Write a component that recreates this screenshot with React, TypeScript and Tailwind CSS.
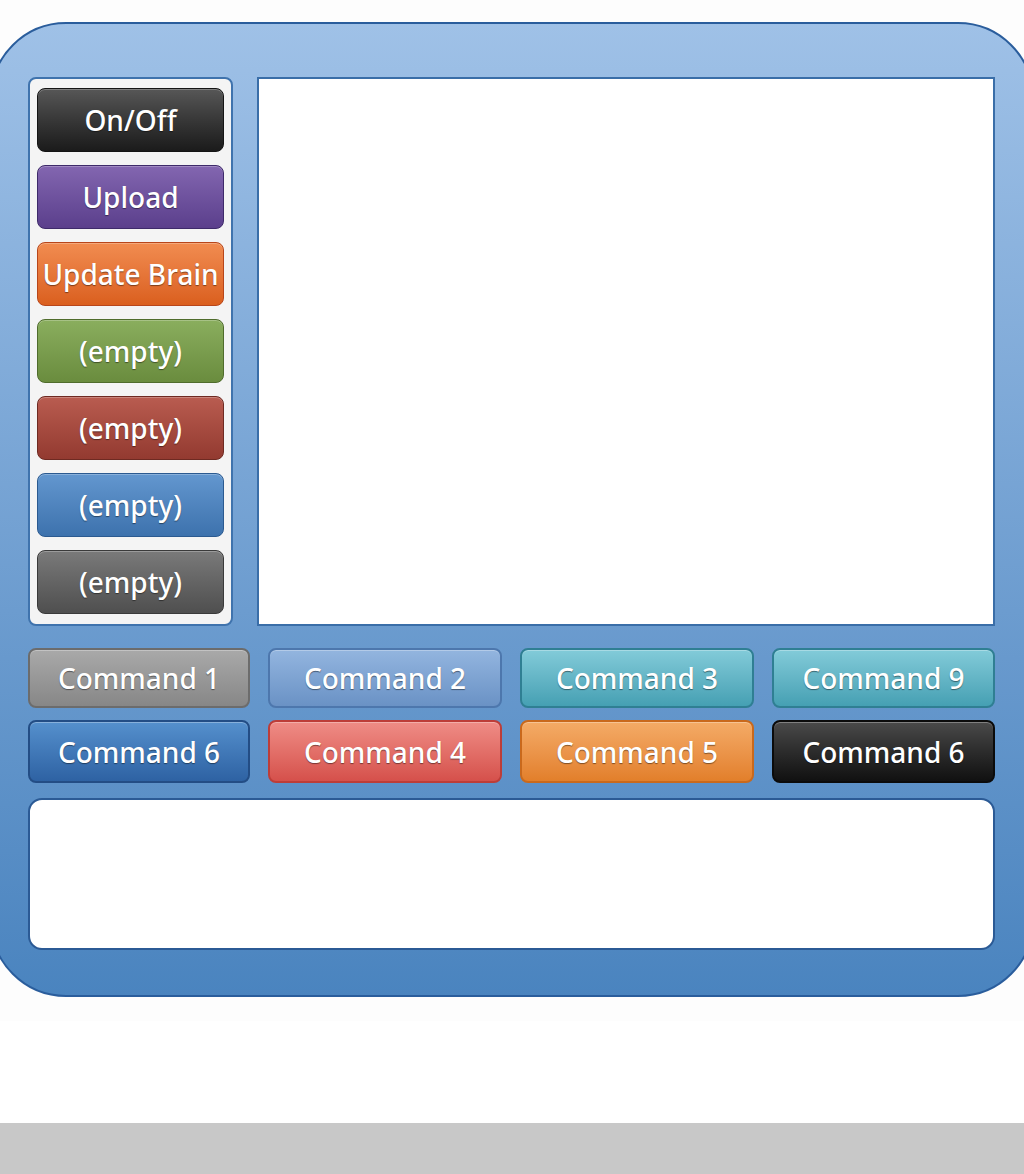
import React from 'react'

const sideButtons = [
  { label: 'On/Off', cls: 'from-[#575757] to-[#1b1b1b] border-[#151515]' },
  { label: 'Upload', cls: 'from-[#8366b0] to-[#5b3f8c] border-[#3e2a6a]' },
  { label: 'Update Brain', cls: 'from-[#f18c50] to-[#da5f1d] border-[#b8461a]' },
  { label: '(empty)', cls: 'from-[#8aae5e] to-[#6a8c3e] border-[#4f6c2c]' },
  { label: '(empty)', cls: 'from-[#b95c50] to-[#933a30] border-[#6e2a22]' },
  { label: '(empty)', cls: 'from-[#6397cf] to-[#3d72ad] border-[#2b5a90]' },
  { label: '(empty)', cls: 'from-[#7a7a7a] to-[#4f4f4f] border-[#3a3a3a]' },
]

const commandRows = [
  [
    { label: 'Command 1', cls: 'from-[#a9a9a9] to-[#878787] border-[#6c6c6c]' },
    { label: 'Command 2', cls: 'from-[#93b5df] to-[#6a92c5] border-[#4d77ad]' },
    { label: 'Command 3', cls: 'from-[#82cbd9] to-[#45a0b3] border-[#2f7f93]' },
    { label: 'Command 9', cls: 'from-[#82cbd9] to-[#45a0b3] border-[#2f7f93]' },
  ],
  [
    { label: 'Command 6', cls: 'from-[#5590cd] to-[#2e62a3] border-[#234d85]' },
    { label: 'Command 4', cls: 'from-[#ef8c86] to-[#d5504b] border-[#bd3d38]' },
    { label: 'Command 5', cls: 'from-[#f4ab66] to-[#e27f2a] border-[#c9691c]' },
    { label: 'Command 6', cls: 'from-[#4a4a4a] to-[#111111] border-[#0b0b0b]' },
  ],
]

const btnText = 'text-white font-medium [text-shadow:0_1px_1px_rgba(0,0,0,0.45)] leading-none whitespace-nowrap'

export default function App() {
  return (
    <div className="flex flex-col h-[1174px] bg-white overflow-hidden font-['Noto_Sans',sans-serif]">
      <div className="pt-[22px] bg-[#fdfdfd]">
        {/* main device panel */}
        <div className="-ml-[10px] w-[1044px] h-[975px] rounded-[76px] border-2 border-[#2a5d9c] bg-linear-to-b from-[#9fc1e7] to-[#4a84bf] pl-[36px] pr-[37px] pt-[53px] flex flex-col">
          <div className="flex gap-[24px] h-[549px]">
            <div className="w-[205px] shrink-0 rounded-[8px] border-2 border-[#3f73ad] bg-[#f4f4f4] px-[7px] pt-[9px] pb-[7px] flex flex-col gap-[13px]">
              {sideButtons.map((b, i) => (
                <button
                  key={i}
                  className={`h-[64px] rounded-[8px] border bg-linear-to-b ${b.cls} shadow-[inset_0_1px_0_rgba(255,255,255,0.25)] flex items-center justify-center text-[28px] ${btnText}`}
                >
                  {b.label}
                </button>
              ))}
            </div>
            <div className="flex-1 border-2 border-[#3a6ea8] bg-white" />
          </div>

          <div className="mt-[22px] flex flex-col gap-[12px]">
            {commandRows.map((row, r) => (
              <div key={r} className="grid grid-cols-[222px_234px_234px_223px] gap-[18px]">
                {row.map((b, i) => (
                  <button
                    key={i}
                    className={`${r === 0 ? 'h-[60px]' : 'h-[63px]'} rounded-[8px] border-2 bg-linear-to-b ${b.cls} shadow-[inset_0_1px_0_rgba(255,255,255,0.3)] flex items-center justify-center text-[28px] ${btnText}`}
                  >
                    {b.label}
                  </button>
                ))}
              </div>
            ))}
          </div>

          <div className="mt-[15px] h-[152px] rounded-[14px] border-2 border-[#2b5a95] bg-white" />
        </div>
        <div className="h-[24px]" />
      </div>
      <div className="flex-1 bg-white" />
      <div className="h-[51px] bg-[#c8c8c8]" />
    </div>
  )
}
